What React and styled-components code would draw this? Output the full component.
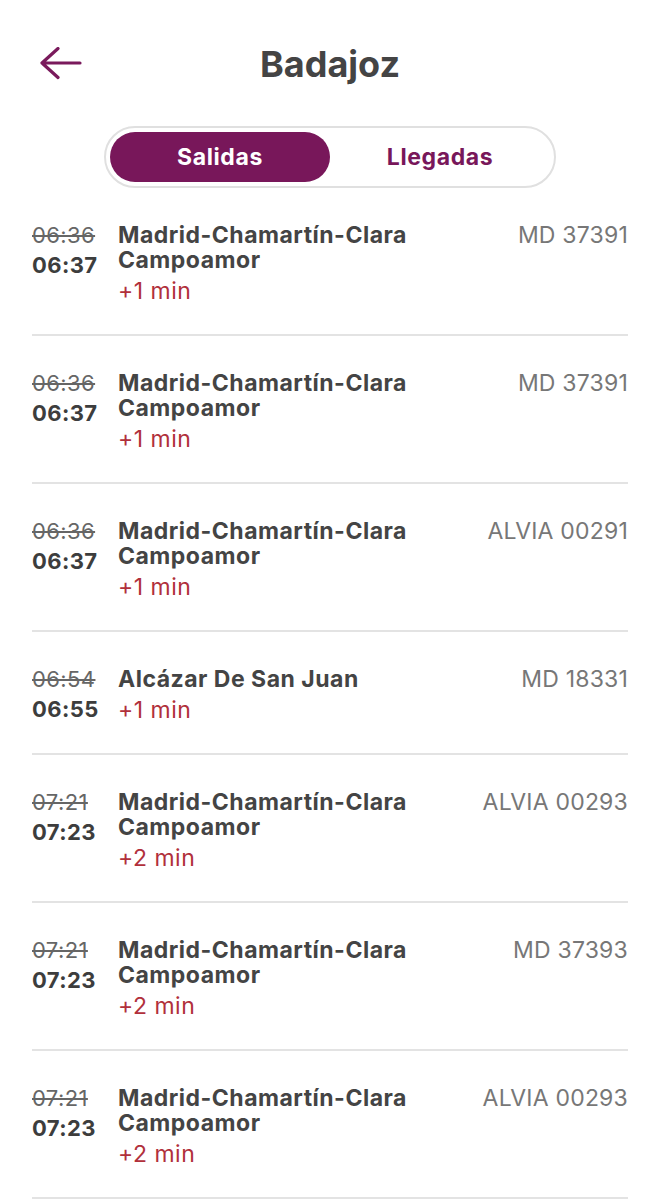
import React, { useState } from "react";
import styled, { createGlobalStyle } from "styled-components";

const Global = createGlobalStyle`
  body {
    margin: 0;
    background: #ffffff;
    font-family: Inter, "Liberation Sans", Arial, sans-serif;
  }
`;

const trains = [
  { planned: "06:36", real: "06:37", dest: "Madrid-Chamartín-Clara Campoamor", delay: "+1 min", code: "MD 37391" },
  { planned: "06:36", real: "06:37", dest: "Madrid-Chamartín-Clara Campoamor", delay: "+1 min", code: "MD 37391" },
  { planned: "06:36", real: "06:37", dest: "Madrid-Chamartín-Clara Campoamor", delay: "+1 min", code: "ALVIA 00291" },
  { planned: "06:54", real: "06:55", dest: "Alcázar De San Juan", delay: "+1 min", code: "MD 18331" },
  { planned: "07:21", real: "07:23", dest: "Madrid-Chamartín-Clara Campoamor", delay: "+2 min", code: "ALVIA 00293" },
  { planned: "07:21", real: "07:23", dest: "Madrid-Chamartín-Clara Campoamor", delay: "+2 min", code: "MD 37393" },
  { planned: "07:21", real: "07:23", dest: "Madrid-Chamartín-Clara Campoamor", delay: "+2 min", code: "ALVIA 00293" },
];

const App = () => {
  const [tab, setTab] = useState("salidas");

  return (
    <Page>
      <Global />
      <Header>
        <BackButton aria-label="Volver">
          <svg width="44" height="34" viewBox="0 0 44 34" fill="none">
            <path
              d="M41 16H3M19 1.5L3 16l16 14.5"
              stroke="#7a1a5c"
              strokeWidth="3.2"
              strokeLinecap="round"
              strokeLinejoin="round"
            />
          </svg>
        </BackButton>
        <Title>Badajoz</Title>
      </Header>

      <Toggle>
        <Tab active={tab === "salidas"} onClick={() => setTab("salidas")}>
          Salidas
        </Tab>
        <Tab active={tab === "llegadas"} onClick={() => setTab("llegadas")}>
          Llegadas
        </Tab>
      </Toggle>

      <List>
        {trains.map((t, key) => (
          <Row key={key}>
            <Times>
              <Planned>{t.planned}</Planned>
              <Real>{t.real}</Real>
            </Times>
            <Info>
              <Dest>{t.dest}</Dest>
              <Delay>{t.delay}</Delay>
            </Info>
            <Code>{t.code}</Code>
          </Row>
        ))}
      </List>
    </Page>
  );
};
export default App;

const Page = styled.div`
  width: 660px;
  min-height: 1200px;
  padding-top: 40px;
  box-sizing: border-box;
`;

const Header = styled.div`
  position: relative;
  height: 48px;
  display: flex;
  align-items: center;
  justify-content: center;
`;

const BackButton = styled.button`
  position: absolute;
  left: 39px;
  top: 7px;
  padding: 0;
  border: none;
  background: none;
  display: flex;
  cursor: pointer;
`;

const Title = styled.h1`
  margin: 0;
  color: #444444;
  font-size: 36px;
  font-weight: 700;
  line-height: 48px;
`;

const Toggle = styled.div`
  margin: 38px auto 0;
  width: 452px;
  height: 62px;
  box-sizing: border-box;
  border: 2px solid #e0e0e0;
  border-radius: 31px;
  padding: 4px;
  display: flex;
`;

const Tab = styled.button`
  flex: 1;
  border: none;
  border-radius: 26px;
  background: ${(p) => (p.active ? "#78175a" : "transparent")};
  color: ${(p) => (p.active ? "#ffffff" : "#78175a")};
  font-family: Inter, "Liberation Sans", Arial, sans-serif;
  font-size: 23px;
  font-weight: 700;
  letter-spacing: 0.6px;
  cursor: pointer;
`;

const List = styled.div`
  margin: 0 32px;
`;

const Row = styled.div`
  display: flex;
  align-items: flex-start;
  padding: 35px 0 30px;
  border-bottom: 2px solid #e3e3e3;
`;

const Times = styled.div`
  width: 86px;
  flex-shrink: 0;
  display: flex;
  flex-direction: column;
`;

const Planned = styled.span`
  color: #666666;
  font-size: 22px;
  line-height: 25px;
  letter-spacing: 0.4px;
  text-decoration: line-through;
`;

const Real = styled.span`
  margin-top: 5px;
  color: #3d3d3d;
  font-size: 22px;
  font-weight: 700;
  line-height: 25px;
  letter-spacing: 0.4px;
`;

const Info = styled.div`
  flex: 1;
  display: flex;
  flex-direction: column;
  padding-right: 12px;
`;

const Dest = styled.span`
  color: #444444;
  font-size: 23px;
  font-weight: 700;
  line-height: 25px;
  letter-spacing: 0.5px;
  max-width: 300px;
`;

const Delay = styled.span`
  margin-top: 6px;
  color: #b1303b;
  font-size: 23px;
  line-height: 25px;
  letter-spacing: 0.5px;
`;

const Code = styled.span`
  color: #777777;
  font-size: 23px;
  line-height: 25px;
  letter-spacing: 0.2px;
  white-space: nowrap;
`;
